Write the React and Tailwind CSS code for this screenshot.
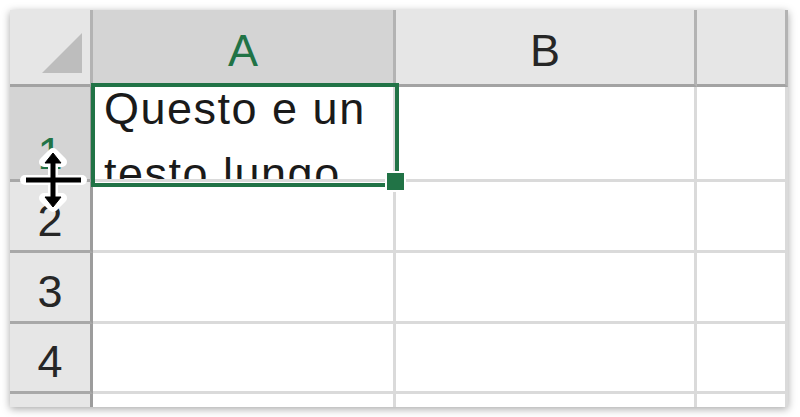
import React from "react";

const hdr = "bg-[#e6e6e6] border-r-[3px] border-b-[3px] border-r-[#b3b3b3] border-b-[#a3a3a3]";
const rowHdr = "bg-[#e6e6e6] border-r-[3px] border-b-[3px] border-r-[#9c9c9c] border-b-[#a8a8a8] flex items-end justify-center pb-[7px] text-[45px] leading-[45px] text-[#262626]";
const cell = "bg-white border-r-[3px] border-b-[3px] border-[#dadada]";

function ResizeCursor() {
  return (
    <svg width="70" height="70" viewBox="0 0 70 70" className="absolute left-[10px] top-[135px]">
      <g stroke="#fff" strokeWidth="10" strokeLinecap="round" strokeLinejoin="round" fill="#fff">
        <line x1="5" y1="35" x2="62" y2="35" />
        <line x1="33" y1="14" x2="33" y2="56" />
        <polygon points="33,8 24,17 42,17" />
        <polygon points="33,62 24,53 42,53" />
      </g>
      <g stroke="#000" strokeWidth="5" fill="#000">
        <line x1="6" y1="35" x2="61" y2="35" />
        <line x1="33" y1="16" x2="33" y2="54" />
        <polygon points="33,8 25,18 41,18" strokeWidth="1" />
        <polygon points="33,62 25,52 41,52" strokeWidth="1" />
      </g>
    </svg>
  );
}

export default function App() {
  const rows = [2, 3, 4];

  return (
    <div className="w-[800px] h-[417px] bg-white p-[10px] font-['Liberation_Sans',Arial,sans-serif]">
      <div className="relative w-[778px] h-[397px] overflow-hidden bg-white shadow-[0_2px_8px_rgba(0,0,0,0.35)]">
        <div className="grid grid-cols-[83px_303px_301px_91px] grid-rows-[77px_95px_71px_71px_70px_13px] h-full">
          {/* corner */}
          <div className={`${hdr} flex items-end justify-end pr-[8px] pb-[11px]`}>
            <svg width="40" height="40" viewBox="0 0 40 40">
              <polygon points="40,0 40,40 0,40" fill="#bdbdbd" />
            </svg>
          </div>
          {/* column headers */}
          <div className="bg-[#d4d4d4] border-r-[3px] border-b-[3px] border-r-[#b3b3b3] border-b-[#9a9a9a] flex items-center justify-center pt-[6px] text-[45px] leading-[45px] text-[#217346]">
            A
          </div>
          <div className={`${hdr} flex items-center justify-center pt-[6px] text-[45px] leading-[45px] text-[#262626]`}>B</div>
          <div className={hdr}></div>

          {/* row 1 */}
          <div className="bg-[#d4d4d4] border-r-[3px] border-b-[3px] border-r-[#9c9c9c] border-b-[#a8a8a8] flex items-end justify-center pb-[3px] text-[45px] leading-[45px] text-[#217346]">
            1
          </div>
          <div className={`${cell} overflow-hidden pl-[11px] text-[45px] leading-[65px] tracking-[1.5px] text-[#1a1a1a]`}>
            <div className="-mt-[11px] whitespace-nowrap">Questo e un</div>
            <div className="whitespace-nowrap">testo lungo</div>
          </div>
          <div className={cell}></div>
          <div className={cell}></div>

          {rows.map((n) => (
            <React.Fragment key={n}>
              <div className={rowHdr}>{n}</div>
              <div className={cell}></div>
              <div className={cell}></div>
              <div className={cell}></div>
            </React.Fragment>
          ))}

          {/* partial row */}
          <div className="bg-[#e6e6e6] border-r-[3px] border-r-[#9c9c9c]"></div>
          <div className="bg-white border-r-[3px] border-[#dadada]"></div>
          <div className="bg-white border-r-[3px] border-[#dadada]"></div>
          <div className="bg-white border-r-[3px] border-[#dadada]"></div>
        </div>

        {/* selection */}
        <div className="absolute left-[81px] top-[73px] w-[308px] h-[104px] border-4 border-[#217346]"></div>
        <div className="absolute left-[377px] top-[163px] w-[17px] h-[17px] bg-[#217346] outline-2 outline-white"></div>

        <ResizeCursor />
      </div>
    </div>
  );
}
